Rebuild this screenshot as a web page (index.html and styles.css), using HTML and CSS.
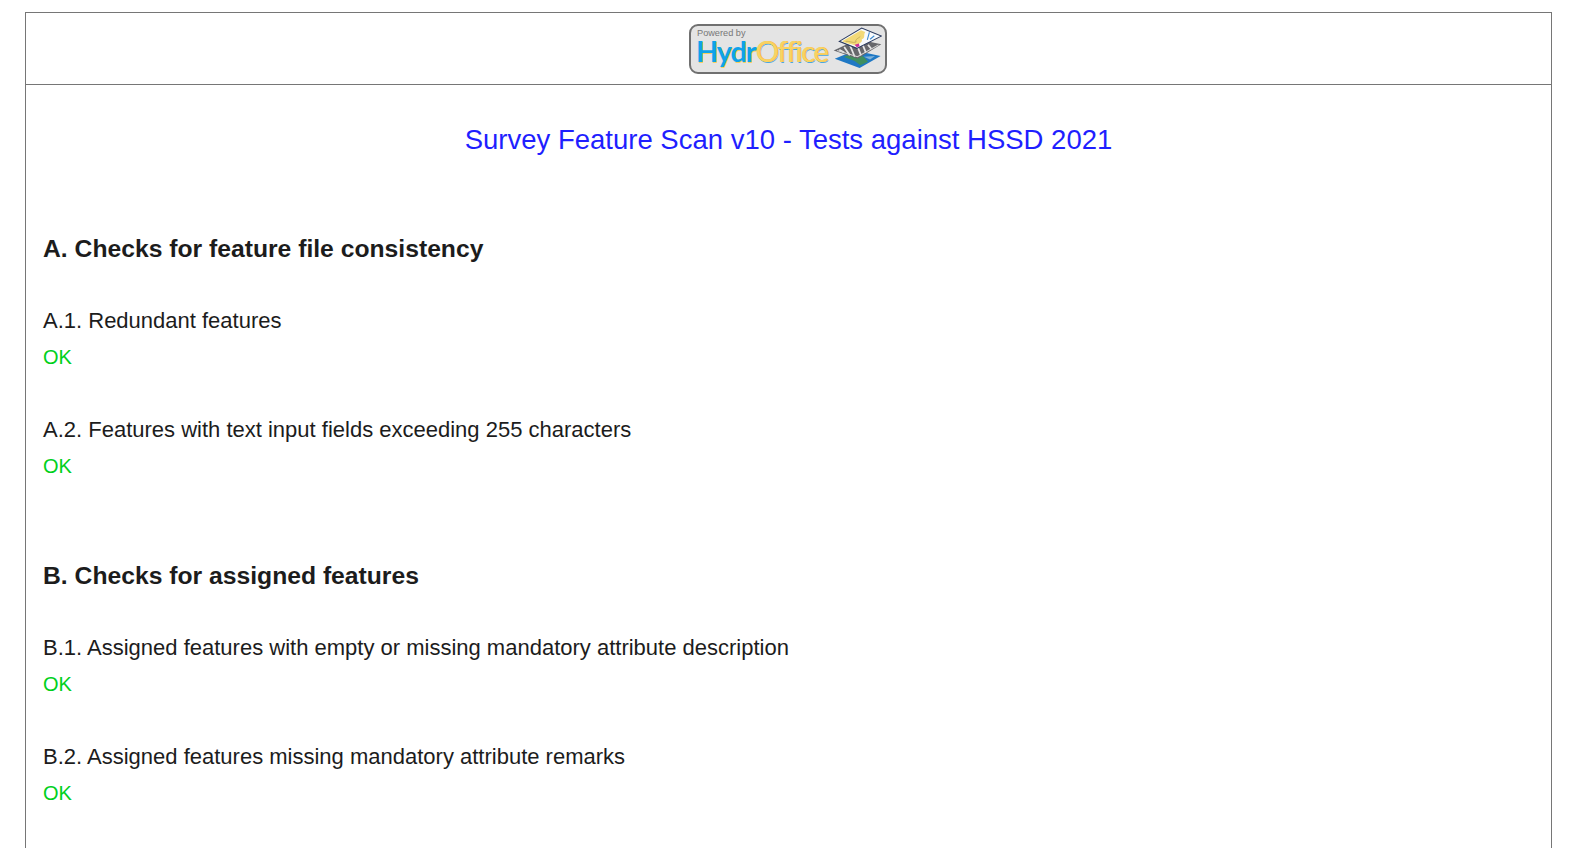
FILE: index.html
```html
<!DOCTYPE html>
<html lang="en">
<head>
<meta charset="utf-8">
<title>Survey Feature Scan v10 - Tests against HSSD 2021</title>
<link rel="stylesheet" href="styles.css">
</head>
<body>
<div class="frame">
  <header class="banner">
    <div class="logo">
      <div class="logo-text">
        <span class="powered">Powered by</span>
        <span class="brand"><span class="hydr">Hydr</span><span class="office">Office</span></span>
      </div>
      <svg class="logo-icon" width="49" height="42" viewBox="30 20 140 118" aria-hidden="true">
        <polygon points="35,110 92,86 166,102 106,136" fill="#1f78c4"/>
        <path d="M60,104 L92,94 L118,104 L130,118 L108,128 L92,116 Z" fill="#3f8f5f"/>
        <path d="M118,104 L150,102 L136,112 Z" fill="#7fb2d8"/>
        <polygon points="32,86 100,54 168,68 100,110" fill="#66676b"/>
        <path d="M48,84 L62,92 M62,76 L78,100 M78,70 L92,104 M96,64 L110,100 M114,68 L124,92 M130,70 L140,82" stroke="#e6e6e6" stroke-width="5" fill="none"/>
        <path d="M42,86 L100,104 L160,70" stroke="#d8d8d8" stroke-width="3" fill="none"/>
        <polygon points="48,60 112,22 168,45 98,80" fill="#f7fafc" stroke="#2b3a5e" stroke-width="3"/>
        <path d="M56,60 L110,28 L122,33 C116,42 124,50 112,54 C116,62 104,66 96,74 C86,66 72,70 56,60 Z" fill="#f2d978"/>
        <path d="M66,60 C76,58 86,66 96,62 C92,54 102,52 108,46" stroke="#b9a24e" stroke-width="2" fill="none"/>
        <path d="M134,34 L128,56 M148,44 L136,54" stroke="#3c88d0" stroke-width="3" fill="none"/>
        <path d="M92,70 L104,66 L106,74 L98,77 Z" fill="#c9309c"/>
      </svg>
    </div>
  </header>
  <main class="content">
    <h1 class="title">Survey Feature Scan v10 - Tests against HSSD 2021</h1>

    <section class="group">
      <h2 class="group-title">A. Checks for feature file consistency</h2>
      <div class="check">
        <p class="check-name">A.1. Redundant features</p>
        <p class="status">OK</p>
      </div>
      <div class="check">
        <p class="check-name">A.2. Features with text input fields exceeding 255 characters</p>
        <p class="status">OK</p>
      </div>
    </section>

    <section class="group">
      <h2 class="group-title">B. Checks for assigned features</h2>
      <div class="check">
        <p class="check-name">B.1. Assigned features with empty or missing mandatory attribute description</p>
        <p class="status">OK</p>
      </div>
      <div class="check">
        <p class="check-name">B.2. Assigned features missing mandatory attribute remarks</p>
        <p class="status">OK</p>
      </div>
    </section>
  </main>
</div>
</body>
</html>
```
FILE: styles.css
```css
html, body {
  margin: 0;
  padding: 0;
  height: 100%;
  overflow: hidden;
  background: #fff;
}
body {
  padding: 12px 23px 0 25px;
  box-sizing: border-box;
  font-family: "Liberation Sans", Arial, sans-serif;
  color: #1c1c1c;
}
.frame {
  border: 1.5px solid #767676;
  min-height: 1000px;
}
.banner {
  height: 71px;
  border-bottom: 1px solid #767676;
  display: flex;
  justify-content: center;
  align-items: center;
}
.logo {
  width: 198px;
  height: 50px;
  box-sizing: border-box;
  border: 2px solid #707070;
  border-radius: 9px;
  background: #e4e4e4;
  display: flex;
  justify-content: space-between;
  align-items: center;
  padding: 0 3px 0 5px;
  margin-left: -1px;
}
.logo-text {
  display: flex;
  flex-direction: column;
  margin-top: -6px;
}
.powered {
  font-size: 9.2px;
  line-height: 10px;
  color: #777;
  margin-left: 1px;
}
.brand {
  font-size: 29px;
  line-height: 27px;
  font-weight: bold;
  font-family: Lato, "Liberation Sans", sans-serif;
  letter-spacing: -1.2px;
  margin-top: -1px;
}
.hydr {
  color: #0ea2ea;
  text-shadow: 1px 1px 0 #f7cf5e;
}
.office {
  color: #f9d263;
  font-weight: normal;
  text-shadow: 1px 0 0 #f2b93c, 1px 1px 0 #4aa8e0;
}
.logo-icon { flex: none; margin-top: -1px; }
.content {
  padding: 0 17px;
}
.title {
  margin: 39px 0 0;
  text-align: center;
  font-size: 27.5px;
  font-weight: normal;
  line-height: 32px;
  color: #1f1fff;
}
.group { margin-top: 79px; }
.group + .group { margin-top: 84px; }
.group-title {
  margin: 0;
  font-size: 24.7px;
  font-weight: bold;
  line-height: 28px;
}
.check { margin-top: 46px; }
.check + .check { margin-top: 49px; }
.check-name {
  margin: 0;
  font-size: 22px;
  line-height: 24px;
}
.status {
  margin: 12px 0 0;
  font-size: 20px;
  line-height: 24px;
  color: #00d01c;
}
```
